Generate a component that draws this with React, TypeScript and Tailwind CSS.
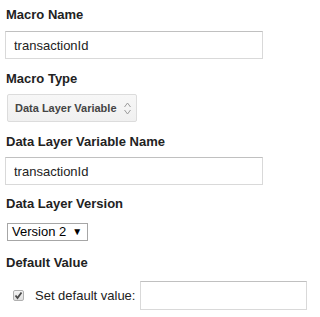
export default function App() {
  return (
    <div className="w-[317px] h-[317px] bg-white overflow-hidden pl-[6px] text-[#222]" style={{ fontFamily: '"Liberation Sans", Arial, sans-serif' }}>
      {/* Macro Name */}
      <h3 className="pt-[7px] text-[13px] leading-4 font-bold">Macro Name</h3>
      <input
        readOnly
        value="transactionId"
        className="mt-[8px] -ml-px block w-[258px] h-[28px] border border-[#d9d9d9] border-t-[#c0c0c0] px-[8px] text-[13px] text-[#222] outline-none"
      />

      {/* Macro Type */}
      <h3 className="mt-[12px] text-[13px] leading-4 font-bold">Macro Type</h3>
      <div className="mt-[7px] ml-px flex items-center justify-between w-[130px] h-[28px] rounded-[2px] border border-[#dcdcdc] bg-gradient-to-b from-[#f7f7f7] to-[#f0f0f0] pl-[7px] pr-[5px]">
        <span className="text-[11px] font-bold text-[#444]">Data Layer Variable</span>
        <svg width="7" height="13" viewBox="0 0 7 13" className="text-[#9a9a9a]">
          <path d="M0.5 5 L3.5 1 L6.5 5 M0.5 8 L3.5 12 L6.5 8" fill="none" stroke="currentColor" strokeWidth="1" />
        </svg>
      </div>

      {/* Data Layer Variable Name */}
      <h3 className="mt-[12px] text-[13px] leading-4 font-bold">Data Layer Variable Name</h3>
      <input
        readOnly
        value="transactionId"
        className="mt-[7px] -ml-px block w-[258px] h-[28px] border border-[#d9d9d9] border-t-[#c0c0c0] px-[8px] text-[13px] text-[#222] outline-none"
      />

      {/* Data Layer Version */}
      <h3 className="mt-[11px] text-[13px] leading-4 font-bold">Data Layer Version</h3>
      <div className="mt-[11px] ml-px flex items-center w-[81px] h-[18px] border border-[#a6a6a6] bg-white pl-[4px]">
        <span className="text-[13px] leading-4 text-black">Version 2</span>
        <span className="ml-[6px] text-[10px] leading-none text-black">▼</span>
      </div>

      {/* Default Value */}
      <h3 className="mt-[14px] text-[13px] leading-4 font-bold">Default Value</h3>
      <div className="mt-[10px] flex items-center h-[29px]">
        <span className="ml-[7px] flex items-center justify-center w-[11px] h-[11px] rounded-[2px] border border-[#b0b0b0] bg-gradient-to-b from-[#f4f4f4] to-[#dedede]">
          <svg width="9" height="9" viewBox="0 0 9 9">
            <path d="M1.5 4.5 L3.5 7 L7.5 1.5" fill="none" stroke="#4a4a4a" strokeWidth="1.8" />
          </svg>
        </span>
        <span className="ml-[11px] text-[13px] text-[#222]">Set default value:</span>
        <input readOnly className="ml-[5px] block w-[167px] h-[29px] border border-[#d9d9d9] border-t-[#c0c0c0] outline-none" />
      </div>
    </div>
  );
}
